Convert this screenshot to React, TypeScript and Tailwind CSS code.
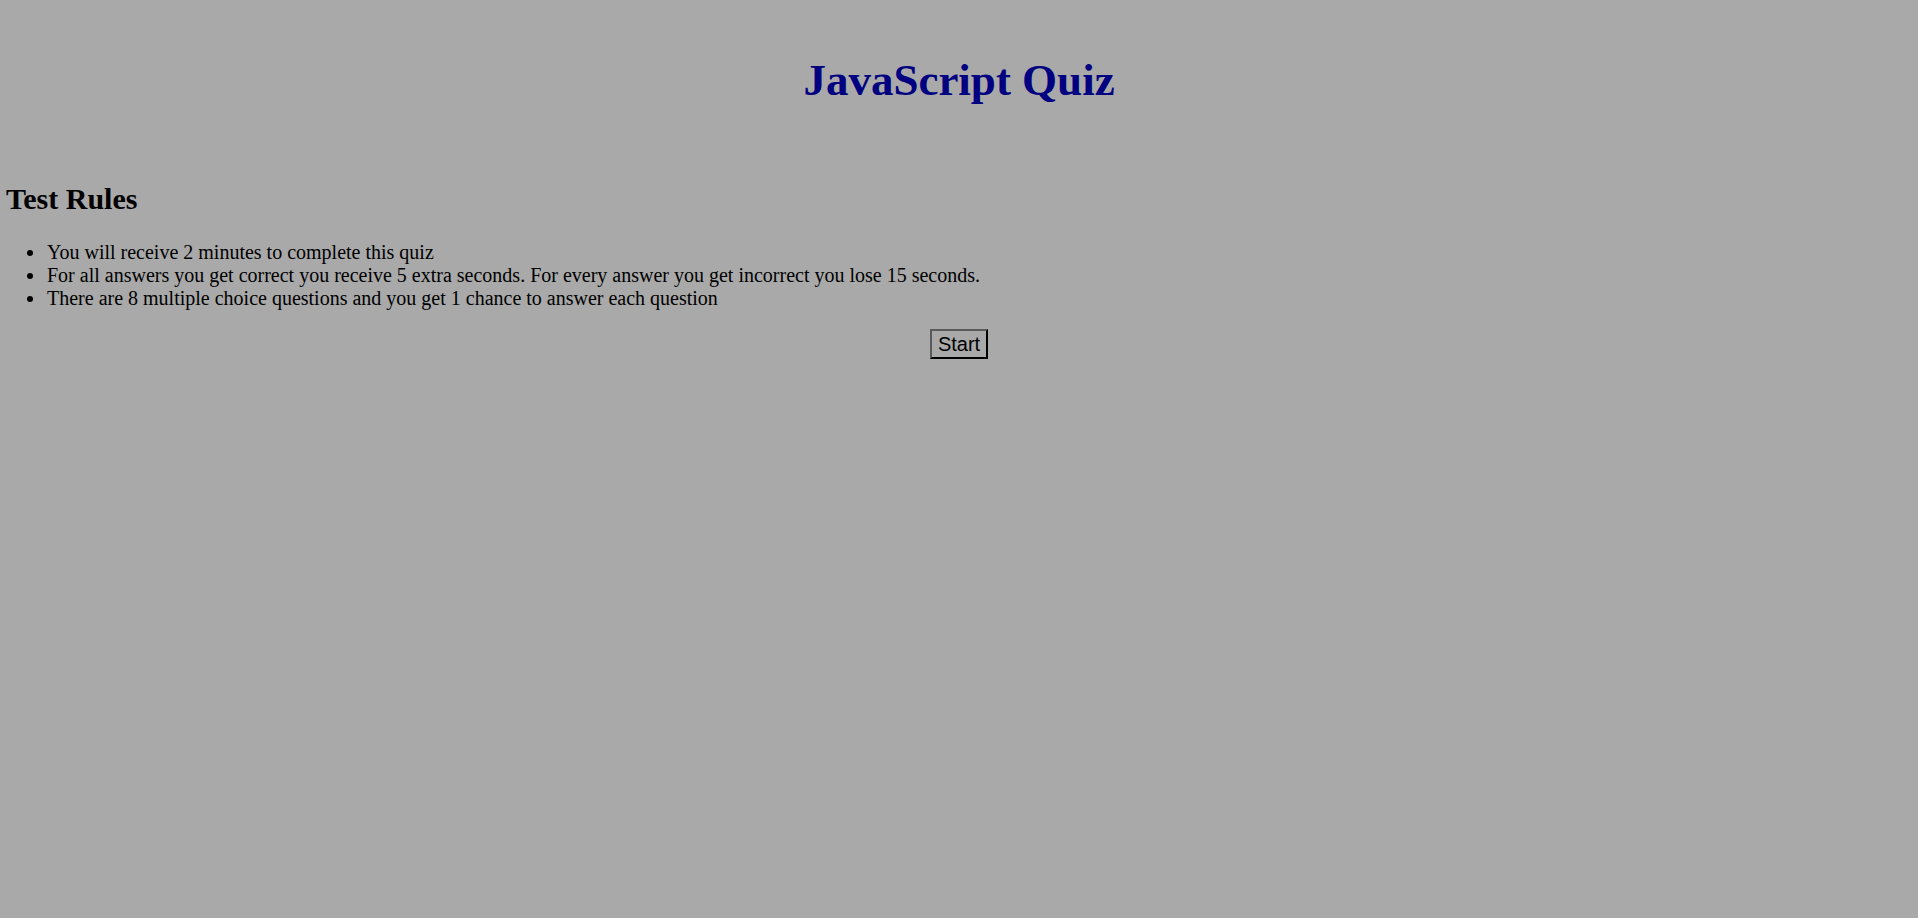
export default function App() {
  const rules = [
    "You will receive 2 minutes to complete this quiz",
    "For all answers you get correct you receive 5 extra seconds. For every answer you get incorrect you lose 15 seconds.",
    "There are 8 multiple choice questions and you get 1 chance to answer each question",
  ];

  return (
    <div className="min-h-[918px] bg-[#a9a9a9] text-black font-['Liberation_Serif',serif] pt-[54px]">
      <h1 className="text-center text-[45px] leading-[52px] font-bold text-[#000080]">JavaScript Quiz</h1>

      <h2 className="mt-[76px] pl-[6px] text-[30px] leading-[34px] font-bold">Test Rules</h2>

      <ul className="mt-[25px] pl-[27px] text-[20px] leading-[23px]">
        {rules.map((r) => (
          <li key={r} className="flex">
            <span className="flex h-[23px] w-[20px] shrink-0 items-center">
              <span className="h-[6px] w-[6px] rounded-full bg-black" />
            </span>
            <span>{r}</span>
          </li>
        ))}
      </ul>

      <div className="mt-[19px] flex justify-center">
        <button className="border-2 border-t-[#5a5a5a] border-l-[#5a5a5a] border-r-black border-b-black bg-[#a9a9a9] px-[6px] py-[1.5px] text-[20px] leading-[23px] font-['Liberation_Sans',Arial,sans-serif] text-black">
          Start
        </button>
      </div>
    </div>
  );
}
